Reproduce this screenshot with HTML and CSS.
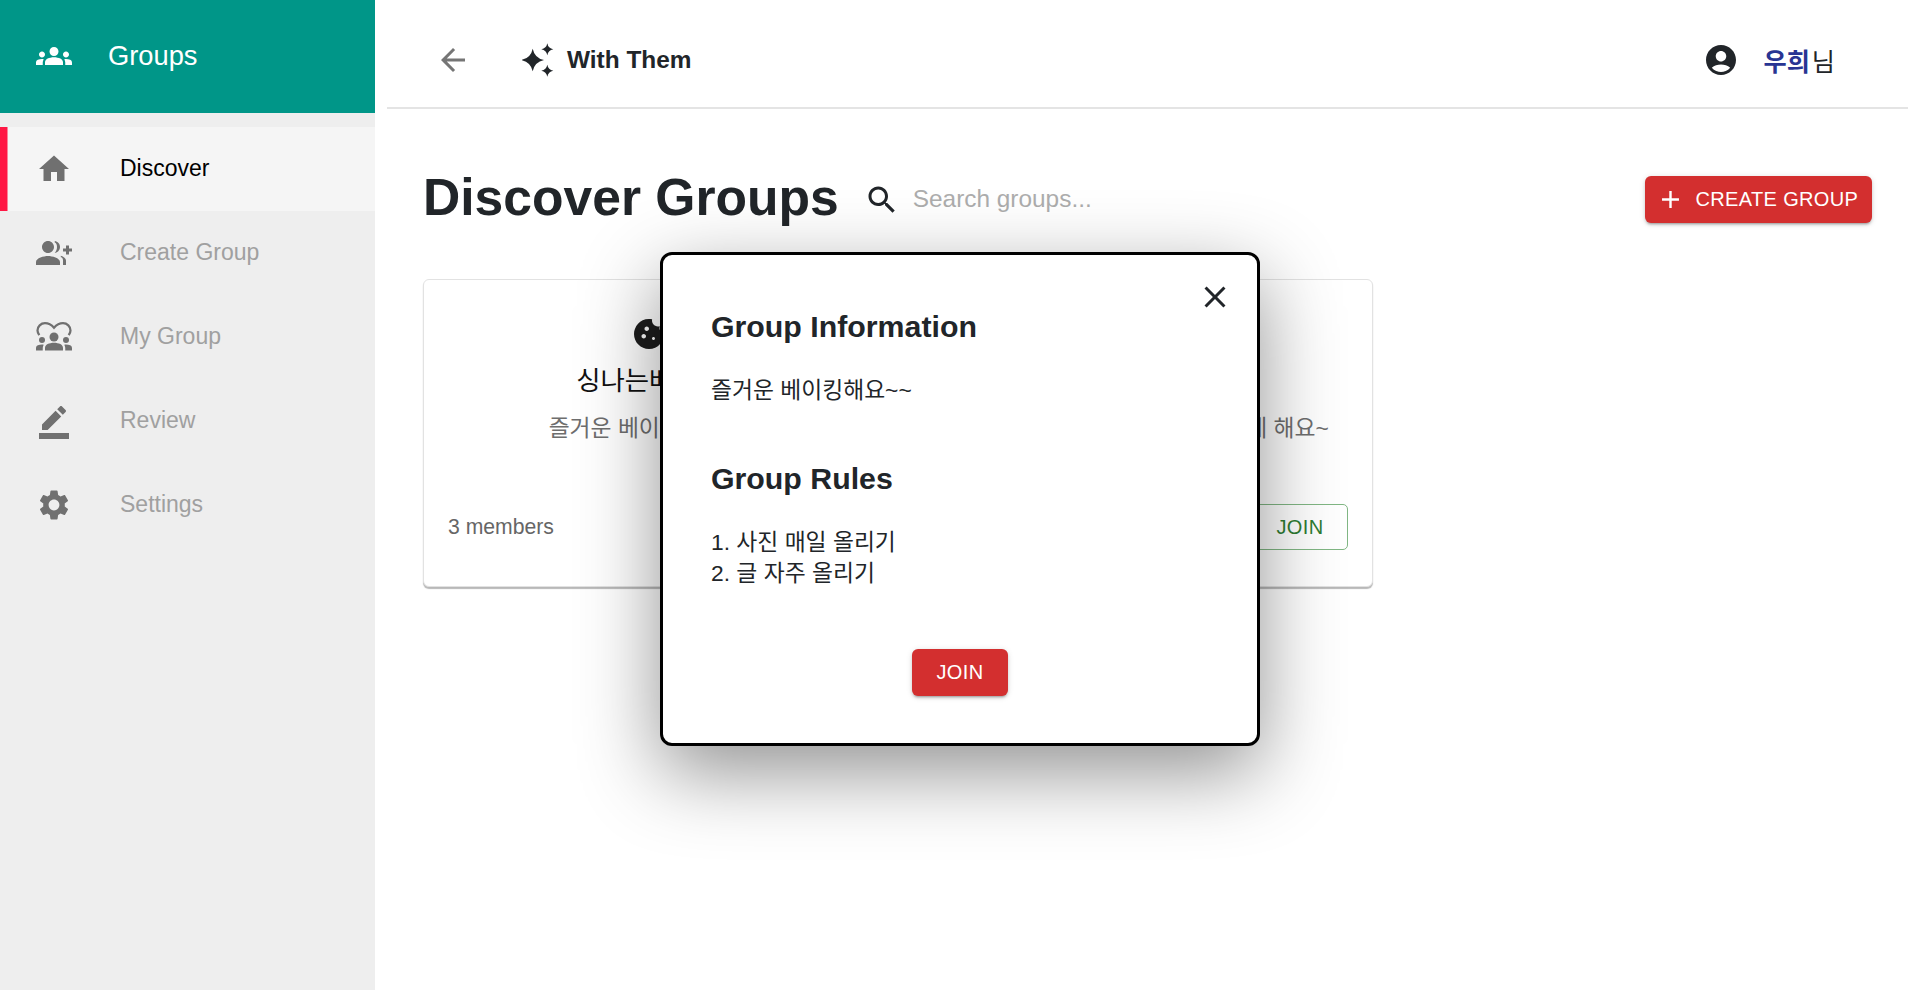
FILE: index.html
```html
<!DOCTYPE html>
<html lang="ko">
    <head>
        <meta charset="UTF-8">
        <meta name="viewport" content="width=device-width, initial-scale=1.0">
        <title>With Them</title>
        <link rel="stylesheet" href="styles.css">
    </head>

    <body>
        <div class="app">
            <aside class="sidebar">
                <div class="brand">
                    <svg class="icon" viewBox="0 0 24 24"><path d="M4 13c1.1 0 2-.9 2-2s-.9-2-2-2-2 .9-2 2 .9 2 2 2zm1.13 1.1c-.37-.06-.74-.1-1.13-.1-.99 0-1.93.21-2.78.58C.48 14.9 0 15.62 0 16.43V18h4.5v-1.61c0-.83.23-1.61.63-2.29zM20 13c1.1 0 2-.9 2-2s-.9-2-2-2-2 .9-2 2 .9 2 2 2zm4 3.43c0-.81-.48-1.53-1.22-1.85C21.93 14.21 20.99 14 20 14c-.39 0-.76.04-1.13.1.4.68.63 1.46.63 2.29V18H24v-1.57zm-7.76-2.78c-1.17-.52-2.61-.9-4.24-.9-1.63 0-3.07.39-4.24.9C6.68 14.13 6 15.21 6 16.39V18h12v-1.61c0-1.18-.68-2.26-1.76-2.74zM12 12c1.66 0 3-1.34 3-3s-1.34-3-3-3-3 1.34-3 3 1.34 3 3 3z"/></svg>
                    <span class="brand-name">Groups</span>
                </div>
                <nav class="nav">
                    <a class="nav-item active">
                        <svg class="icon" viewBox="0 0 24 24"><path d="M10 20v-6h4v6h5v-8h3L12 3 2 12h3v8z"/></svg>
                        <span>Discover</span>
                    </a>
                    <a class="nav-item">
                        <svg class="icon" viewBox="0 0 24 24"><path d="M22 9V7h-2v2h-2v2h2v2h2v-2h2V9h-2zM8 12c2.21 0 4-1.79 4-4s-1.79-4-4-4-4 1.79-4 4 1.79 4 4 4zm0 2c-2.67 0-8 1.34-8 4v2h16v-2c0-2.66-5.33-4-8-4zm4.51-8.95C13.43 5.11 14 6.49 14 8s-.57 2.89-1.49 3.95C14.47 11.7 16 10.04 16 8s-1.53-3.7-3.49-3.95zm4.02 9.78C17.42 14.66 18 15.7 18 17v3h2v-3c0-1.45-1.59-2.51-3.47-3.17z"/></svg>
                        <span>Create Group</span>
                    </a>
                    <a class="nav-item">
                        <svg class="icon" viewBox="0 0 24 24"><circle cx="4" cy="14" r="2"/><path d="M1.22 17.58C.48 17.9 0 18.62 0 19.43V21h4.5v-1.61c0-.83.23-1.61.63-2.29-.37-.06-.74-.1-1.13-.1-.99 0-1.93.21-2.78.58z"/><circle cx="20" cy="14" r="2"/><path d="M22.78 17.58C21.93 17.21 20.99 17 20 17c-.39 0-.76.04-1.13.1.4.68.63 1.46.63 2.29V21H24v-1.57c0-.81-.48-1.53-1.22-1.85zm-6.54-.93c-1.17-.52-2.61-.9-4.24-.9-1.63 0-3.07.39-4.24.9C6.68 17.13 6 18.21 6 19.39V21h12v-1.61c0-1.18-.68-2.26-1.76-2.74z"/><circle cx="12" cy="12" r="3"/><path class="heart" d="M2.2 10.8C1.5 9.7 1 8.7 1 7.6 1 5 3.2 2.8 6 2.8c2.4 0 4.4 1.2 6 3 1.6-1.8 3.6-3 6-3 2.8 0 5 2.2 5 4.8 0 1.1-.5 2.1-1.2 3.2"/></svg>
                        <span>My Group</span>
                    </a>
                    <a class="nav-item">
                        <svg class="icon" viewBox="0 0 24 24"><path d="M22 24H2v-4h20v4zM13.06 5.19l3.75 3.75L7.75 18H4v-3.75l9.06-9.06zm4.82 2.68-3.75-3.75 1.83-1.83c.39-.39 1.02-.39 1.41 0l2.34 2.34c.39.39.39 1.02 0 1.41l-1.83 1.83z"/></svg>
                        <span>Review</span>
                    </a>
                    <a class="nav-item">
                        <svg class="icon" viewBox="0 0 24 24"><path d="M19.14 12.94c.04-.3.06-.61.06-.94 0-.32-.02-.64-.07-.94l2.03-1.58c.18-.14.23-.41.12-.61l-1.92-3.32c-.12-.22-.37-.29-.59-.22l-2.39.96c-.5-.38-1.03-.7-1.62-.94l-.36-2.54c-.04-.24-.24-.41-.48-.41h-3.84c-.24 0-.43.17-.47.41l-.36 2.54c-.59.24-1.13.57-1.62.94l-2.39-.96c-.22-.08-.47 0-.59.22L2.74 8.87c-.12.21-.08.47.12.61l2.03 1.58c-.05.3-.09.63-.09.94s.02.64.07.94l-2.03 1.58c-.18.14-.23.41-.12.61l1.92 3.32c.12.22.37.29.59.22l2.39-.96c.5.38 1.03.7 1.62.94l.36 2.54c.05.24.24.41.48.41h3.84c.24 0 .44-.17.47-.41l.36-2.54c.59-.24 1.13-.56 1.62-.94l2.39.96c.22.08.47 0 .59-.22l1.92-3.32c.12-.22.07-.47-.12-.61l-2.01-1.58zM12 15.6c-1.98 0-3.6-1.62-3.6-3.6s1.62-3.6 3.6-3.6 3.6 1.62 3.6 3.6-1.62 3.6-3.6 3.6z"/></svg>
                        <span>Settings</span>
                    </a>
                </nav>
            </aside>

            <main class="main">
                <header class="topbar">
                    <svg class="icon back" viewBox="0 0 24 24"><path d="M20 11H7.83l5.59-5.59L12 4l-8 8 8 8 1.41-1.41L7.83 13H20v-2z"/></svg>
                    <svg class="icon logo" viewBox="0 0 36 36"><path d="M10.7 6.7Q12.6 16.1 22 18 12.6 19.9 10.7 29.3 8.8 19.9-.6 18 8.8 16.1 10.7 6.7z"/><path d="M25.3 1.3Q26.2 6.4 31.3 7.3 26.2 8.2 25.3 13.3 24.4 8.2 19.3 7.3 24.4 6.4 25.3 1.3z"/><path d="M25.3 22.7Q26.2 27.8 31.3 28.7 26.2 29.6 25.3 34.7 24.4 29.6 19.3 28.7 24.4 27.8 25.3 22.7z"/></svg>
                    <span class="logo-text">With Them</span>
                    <div class="user">
                        <svg class="icon" viewBox="0 0 24 24"><path d="M12 2C6.48 2 2 6.48 2 12s4.48 10 10 10 10-4.48 10-10S17.52 2 12 2zm0 4c1.93 0 3.5 1.57 3.5 3.5S13.93 13 12 13s-3.5-1.57-3.5-3.5S10.07 6 12 6zm0 14c-2.03 0-4.43-.82-6.14-2.88C7.55 15.8 9.68 15 12 15s4.45.8 6.14 2.12C16.43 19.18 14.03 20 12 20z"/></svg>
                        <span class="user-name"><b>우희</b>님</span>
                    </div>
                </header>

                <section class="content">
                    <div class="title-row">
                        <h1>Discover Groups</h1>
                        <svg class="icon search-icon" viewBox="0 0 24 24"><path d="M15.5 14h-.79l-.28-.27C15.41 12.59 16 11.11 16 9.5 16 5.91 13.09 3 9.5 3S3 5.91 3 9.5 5.91 16 9.5 16c1.61 0 3.09-.59 4.23-1.57l.27.28v.79l5 4.99L20.49 19l-4.99-5zm-6 0C7.01 14 5 11.99 5 9.5S7.01 5 9.5 5 14 7.01 14 9.5 11.99 14 9.5 14z"/></svg>
                        <input class="search" type="text" placeholder="Search groups...">
                        <button class="btn btn-create">
                            <svg class="add-icon" viewBox="0 0 24 24"><path d="M19 13h-6v6h-2v-6H5v-2h6V5h2v6h6v2z"/></svg>
                            CREATE GROUP
                        </button>
                    </div>

                    <div class="cards">
                        <div class="card">
                            <svg class="icon card-icon" viewBox="0 0 24 24"><path d="M21.95 10.99c-1.79-.03-3.7-1.95-2.68-4.22-2.98 1-5.77-1.59-5.19-4.56C6.95.71 2 6.58 2 12c0 5.52 4.48 10 10 10 5.89 0 10.54-5.08 9.95-11.01zM8.5 15c-.83 0-1.5-.67-1.5-1.5S7.67 12 8.5 12s1.5.67 1.5 1.5S9.33 15 8.5 15zm2-5C9.67 10 9 9.33 9 8.5S9.67 7 10.5 7s1.5.67 1.5 1.5-.67 1.5-1.5 1.5zm4.5 6c-.55 0-1-.45-1-1s.45-1 1-1 1 .45 1 1-.45 1-1 1z"/></svg>
                            <h3>싱나는베이킹</h3>
                            <p class="card-desc">즐거운 베이킹해요~~</p>
                            <div class="card-foot">
                                <span class="members">3 members</span>
                                <button class="btn-outline">JOIN</button>
                            </div>
                        </div>
                        <div class="card">
                            <svg class="icon card-icon" viewBox="0 0 24 24"><path d="M21.95 10.99c-1.79-.03-3.7-1.95-2.68-4.22-2.98 1-5.77-1.59-5.19-4.56C6.95.71 2 6.58 2 12c0 5.52 4.48 10 10 10 5.89 0 10.54-5.08 9.95-11.01z"/></svg>
                            <h3>아침 달리기</h3>
                            <p class="card-desc">매일 아침 달리면서 더 건강하게 해요~</p>
                            <div class="card-foot">
                                <span class="members">5 members</span>
                                <button class="btn-outline">JOIN</button>
                            </div>
                        </div>
                    </div>
                </section>
            </main>
        </div>

        <div class="modal">
            <svg class="icon close" viewBox="0 0 24 24"><path d="M19 6.41 17.59 5 12 10.59 6.41 5 5 6.41 10.59 12 5 17.59 6.41 19 12 13.41 17.59 19 19 17.59 13.41 12z"/></svg>
            <h2>Group Information</h2>
            <p class="modal-text">즐거운 베이킹해요~~</p>
            <h2 class="rules-title">Group Rules</h2>
            <ol class="rules">
                <li>사진 매일 올리기</li>
                <li>글 자주 올리기</li>
            </ol>
            <div class="modal-foot">
                <button class="btn btn-join">JOIN</button>
            </div>
        </div>
    </body>
</html>
```

FILE: styles.css
```css
*{
    box-sizing: border-box;
}
html, body{
    height: 100%;
    margin: 0;
    overflow: hidden;
}
body{
    font-family: "Liberation Sans", "Noto Sans CJK KR", sans-serif;
    color: #212529;
    background-color: white;
}
.app{
    display: flex;
    height: 100%;
}
.icon{
    width: 36px;
    height: 36px;
    flex: none;
    fill: currentColor;
    display: block;
}

/* sidebar */
.sidebar{
    width: 375px;
    flex: none;
    background-color: #eeeeee;
}
.brand{
    display: flex;
    align-items: center;
    gap: 36px;
    height: 113px;
    padding: 0 0 1px 36px;
    background-color: #009688;
    color: white;
}
.brand-name{
    font-size: 27.3px;
}
.nav{
    margin-top: 14px;
}
.nav-item{
    display: flex;
    align-items: center;
    gap: 48px;
    height: 84px;
    padding-left: 36px;
    font-size: 23px;
    color: #a0a0a0;
}
.nav-item .icon{
    color: #707070;
}
.nav-item span{
    margin-bottom: 1px;
}
.nav-item .heart{
    fill: none;
    stroke: currentColor;
    stroke-width: 1.5;
}
.nav-item.active{
    background-color: #f5f5f5;
    box-shadow: inset 7.5px 0 0 #ff1744;
    color: black;
}

/* top bar */
.main{
    flex: 1;
    min-width: 0;
}
.topbar{
    display: flex;
    align-items: center;
    height: 109px;
    margin: 0 11px 0 12px;
    padding: 12px 73px 0 48px;
    border-bottom: 2px solid #e4e4e4;
}
.back{
    color: #757575;
}
.logo{
    margin-left: 51px;
}
.logo-text{
    margin-left: 9px;
    font-size: 24.4px;
    font-weight: bold;
}
.user{
    display: flex;
    align-items: center;
    gap: 24px;
    margin-left: auto;
}
.user-name{
    font-size: 25.2px;
}
.user-name b{
    margin-right: 2px;
    color: #283593;
}

/* content */
.content{
    padding: 67px 47px 0 48px;
}
.title-row{
    display: flex;
    align-items: center;
}
h1{
    align-self: flex-start;
    margin: 0;
    font-size: 51.6px;
    line-height: 43px;
}
.search-icon{
    margin-left: 25px;
}
.search{
    margin: 0 0 2px 13px;
    width: 400px;
    border: none;
    outline: none;
    padding: 0;
    font-family: inherit;
    font-size: 24.4px;
    color: #212529;
    background: transparent;
}
.search::placeholder{
    color: #adadad;
}
.btn{
    display: flex;
    align-items: center;
    justify-content: center;
    border: none;
    border-radius: 6px;
    background-color: #d32f2f;
    color: white;
    font-family: inherit;
    font-size: 20px;
    letter-spacing: .35px;
    box-shadow: 0 3px 2px -2px rgba(0,0,0,.2), 0 2px 3px rgba(0,0,0,.14), 0 1px 6px rgba(0,0,0,.12);
}
.btn-create{
    justify-content: flex-start;
    width: 227px;
    height: 47px;
    margin-left: auto;
    padding: 0 0 0 10.5px;
    gap: 11px;
}
.add-icon{
    width: 29px;
    height: 29px;
    fill: white;
    flex: none;
}
.cards{
    display: grid;
    grid-template-columns: 452px 448px;
    gap: 50px;
    margin-top: 56px;
}
.card{
    display: flex;
    flex-direction: column;
    align-items: center;
    height: 308px;
    padding: 36px 24px 0;
    background-color: white;
    border: 1px solid #e2e2e2;
    border-radius: 6px;
    box-shadow: 0 2px 1px rgba(0,0,0,.28);
}
.card-icon{
    color: #1d1d1d;
}
h3{
    margin: 11px 0 0;
    font-size: 26.4px;
    font-weight: normal;
    line-height: 36px;
    color: #111;
}
.card-desc{
    margin: 12px 0 0;
    font-size: 22.8px;
    line-height: 34px;
    color: #6e6e6e;
    white-space: nowrap;
}
.card-foot{
    display: flex;
    align-items: center;
    justify-content: space-between;
    width: 100%;
    margin-top: auto;
    margin-bottom: 36px;
}
.members{
    font-size: 21.2px;
    color: #666;
}
.btn-outline{
    width: 96px;
    height: 46px;
    padding: 0;
    border: 1px solid #81b784;
    border-radius: 5px;
    background: white;
    color: #2e7d32;
    font-family: inherit;
    font-size: 20px;
    letter-spacing: .35px;
}

/* modal */
.modal{
    position: absolute;
    top: 252px;
    left: 660px;
    width: 600px;
    height: 494px;
    padding: 54px 48px 0;
    background-color: white;
    border: 3px solid black;
    border-radius: 12px;
    box-shadow: 0 26px 80px rgba(0,0,0,.43);
}
.close{
    position: absolute;
    top: 24px;
    right: 24px;
}
h2{
    margin: 0;
    font-size: 30.3px;
    line-height: 36px;
}
.modal-text{
    margin: 30px 0 0;
    font-size: 22.8px;
    line-height: 31px;
}
.rules-title{
    margin-top: 55px;
}
.rules{
    margin: 30px 0 0;
    padding: 0;
    list-style-position: inside;
    font-size: 22.8px;
    line-height: 31px;
}
.modal-foot{
    display: flex;
    justify-content: center;
    margin-top: 60px;
}
.btn-join{
    width: 96px;
    height: 47px;
}
```
